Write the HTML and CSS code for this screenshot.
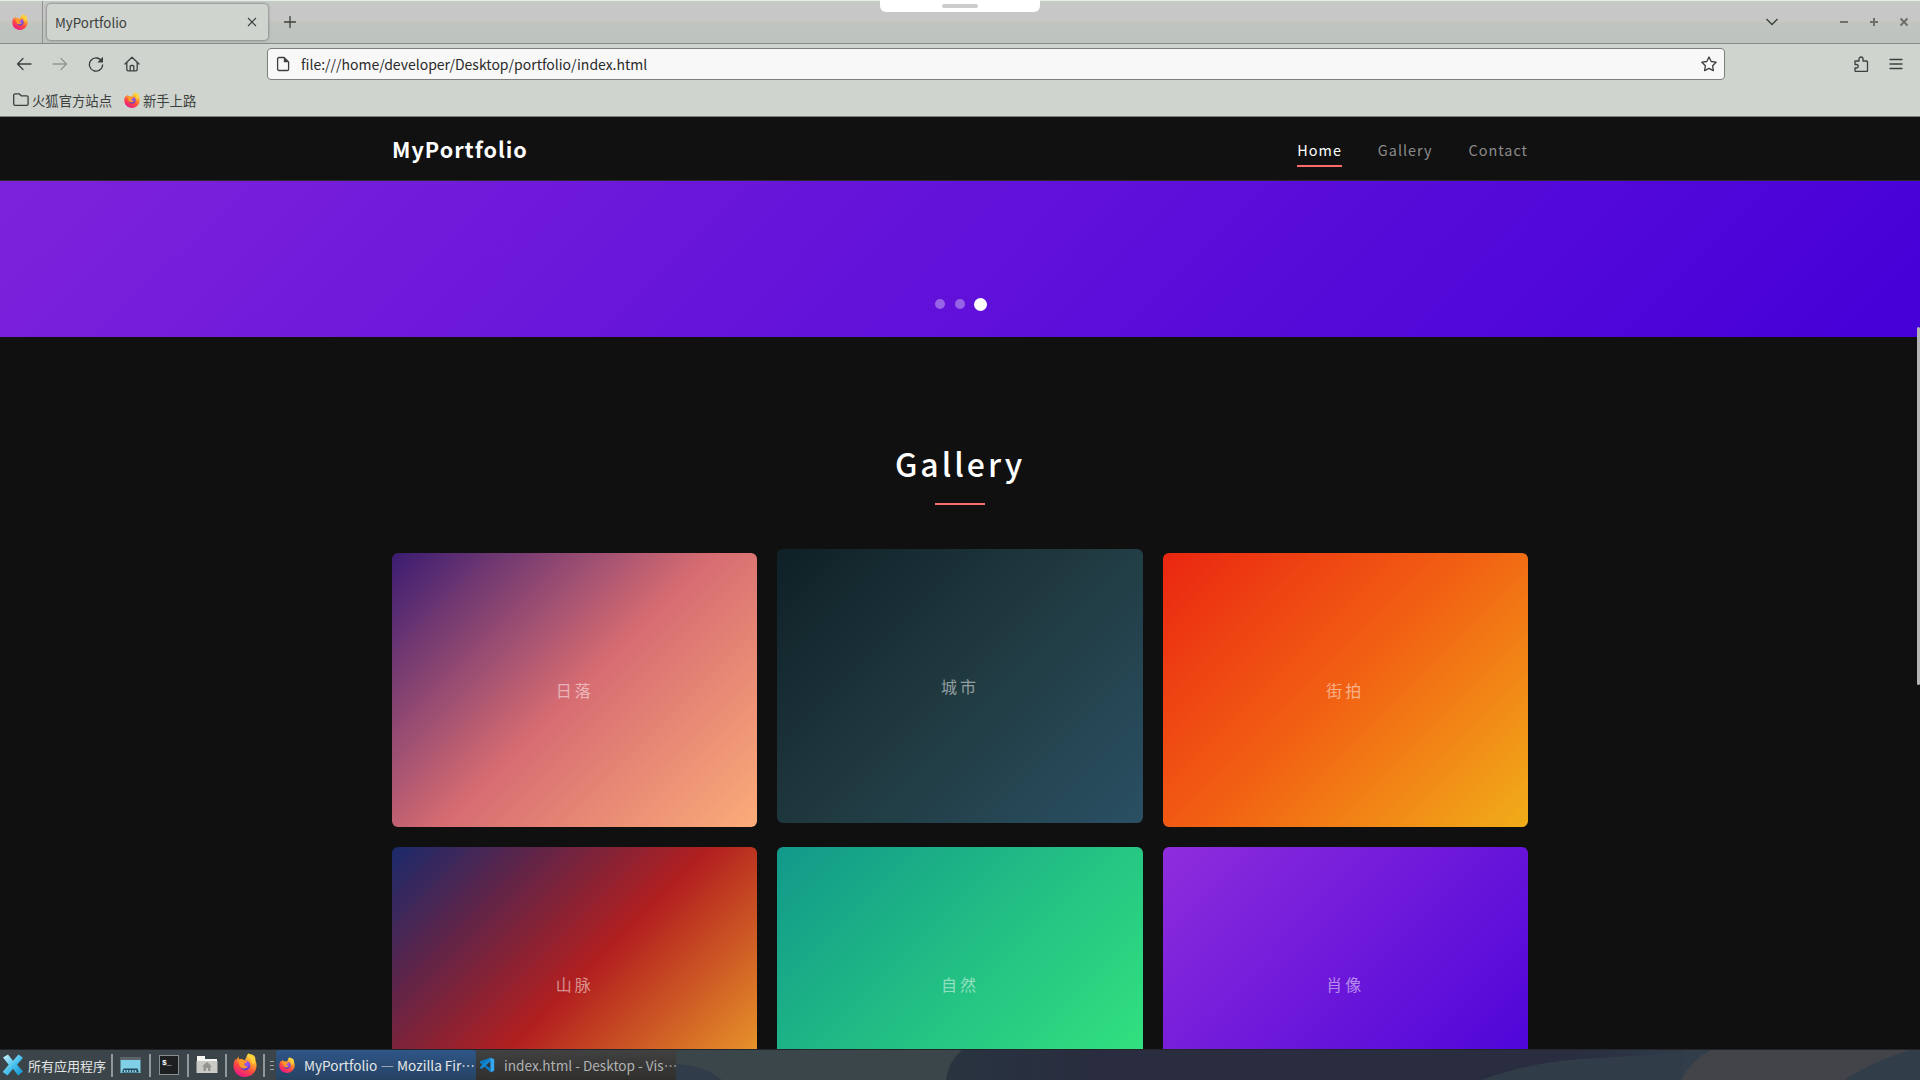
FILE: index.html
```html
<!DOCTYPE html>
<html lang="zh-CN">
  <head>
    <meta charset="UTF-8" />
    <meta name="viewport" content="width=device-width, initial-scale=1.0" />
    <title>MyPortfolio</title>
    <link rel="stylesheet" href="styles.css" />
  </head>
  <body>
    <!-- shared firefox logo -->
    <svg class="sprite" aria-hidden="true">
      <defs>
        <linearGradient id="fox-body" x1="0.8" y1="0" x2="0.3" y2="1">
          <stop offset="0" stop-color="#fff44f" />
          <stop offset="0.35" stop-color="#ffa02c" />
          <stop offset="0.65" stop-color="#ff4a42" />
          <stop offset="1" stop-color="#e8148c" />
        </linearGradient>
        <radialGradient id="fox-globe" cx="0.6" cy="0.3" r="0.8">
          <stop offset="0" stop-color="#a55cf8" />
          <stop offset="1" stop-color="#4a35c4" />
        </radialGradient>
        <symbol id="firefox" viewBox="0 0 24 24">
          <path d="M15.500 0c.4 2.200 2.300 3.400 3.500 4.700l.7-1.200C22.500 6.500 24 10 23.400 14 22.600 19.800 17.800 24 12 24 5.500 24 .5 19.100.5 12.900c0-3.100.9-5.500 2.200-7.200l.3 1.500L5.500 3.600l.5 2.600c2-.4 4 .1 5.200 1C13.400 6.400 13 3 15.500 0z" fill="url(#fox-body)" />
          <circle cx="12.300" cy="12.500" r="5" fill="url(#fox-globe)" />
          <path d="M4.500 7.500c2-1.300 5-1.100 6.800-.1 1.500.2 2.700.4 2.800 1.100-.2 1.200-2.300 1.400-2.900 2.300-.3 1.600 1.600 2.900 3.500 2.200-.6 2.400-4.200 3.200-6.500 1.600C6 13 6.500 9.500 4.500 7.500z" fill="#ff9a2a" />
          <path d="M15 1c-.5 3 4.500 5 4.500 11 2.500-1.500 3.500-5 2.500-8-1-2.500-5-3-7-3z" fill="#ffd23e" />
        </symbol>
      </defs>
    </svg>

    <div class="desktop">
      <header class="browser">
        <div class="pull-handle"><span></span></div>

        <div class="tab-bar">
          <div class="pinned"><svg class="fox"><use href="#firefox" /></svg></div>
          <div class="tab">
            <span>MyPortfolio</span>
            <svg class="tab-close" viewBox="0 0 10 10"><path d="M1 1l8 8M9 1l-8 8" /></svg>
          </div>
          <svg class="icon new-tab" viewBox="0 0 16 16"><path d="M8 2.500v11M2.500 8h11" /></svg>
          <div class="window-controls">
            <svg class="chevron" viewBox="0 0 14 8"><path d="M1.500 1l5.500 5.500L12.500 1" /></svg>
            <svg class="win" viewBox="0 0 10 10"><path d="M1 5h8" /></svg>
            <svg class="win" viewBox="0 0 10 10"><path d="M1 5h8M5 1v8" /></svg>
            <svg class="win" viewBox="0 0 10 10"><path d="M1.500 1.500l7 7M8.500 1.500l-7 7" /></svg>
          </div>
        </div>

        <div class="toolbar">
          <div class="nav-buttons">
            <svg class="icon" viewBox="0 0 16 16"><path d="M15 8H1.500M7 2.500L1.500 8 7 13.500" /></svg>
            <svg class="icon disabled" viewBox="0 0 16 16"><path d="M1 8h13.500M9 2.500L14.500 8 9 13.500" /></svg>
            <svg class="icon" viewBox="0 0 16 16"><path d="M13.700 5.200A6.600 6.600 0 1 0 14.600 9" /><path class="solid" d="M15 .8v5.700H9.300z" /></svg>
            <svg class="icon" viewBox="0 0 16 16"><path d="M1 8L8 1.200 15 8M2.800 6.500v7a1.300 1.300 0 0 0 1.300 1.300h7.800a1.300 1.300 0 0 0 1.300-1.300v-7M6.200 14.500V10.500a1 1 0 0 1 1-1h1.600a1 1 0 0 1 1 1v4" /></svg>
          </div>
          <div class="url-bar">
            <svg class="icon" viewBox="0 0 16 16"><path d="M3.900 1.500h5.200L13.600 6v7.200a1.300 1.300 0 0 1-1.300 1.300H3.900a1.300 1.300 0 0 1-1.300-1.300V2.800a1.300 1.300 0 0 1 1.300-1.300z" /><path class="solid" d="M8.800 1.500V6.300h4.800z" /></svg>
            <span class="url">file:///home/developer/Desktop/portfolio/index.html</span>
            <svg class="icon" viewBox="0 0 16 16"><path d="M8 1l2.200 4.500 4.900.7-3.500 3.500.8 4.900L8 12.300l-4.400 2.300.8-4.900L.9 6.200l4.900-.7z" /></svg>
          </div>
          <div class="toolbar-end">
            <svg class="icon" viewBox="0 0 16 16"><path d="M2 5h4V3a2 2 0 0 1 4 0v2h3.500a1 1 0 0 1 1 1v8.500a1 1 0 0 1-1 1H3a1 1 0 0 1-1-1V12h1.500a1.700 1.700 0 0 0 0-3.500H2z" /></svg>
            <svg class="icon" viewBox="0 0 16 16"><path d="M2 3.500h12M2 8h12M2 12.500h12" /></svg>
          </div>
        </div>

        <div class="bookmarks">
          <span class="bookmark">
            <svg class="icon" viewBox="0 0 16 16"><path d="M2 1.800h4.200l2 2h5.600a1.300 1.300 0 0 1 1.300 1.300v7a1.300 1.300 0 0 1-1.300 1.300H2A1.300 1.300 0 0 1 .7 12.100v-9A1.300 1.300 0 0 1 2 1.800z" /></svg>
            火狐官方站点
          </span>
          <span class="bookmark">
            <svg class="fox"><use href="#firefox" /></svg>
            新手上路
          </span>
        </div>
      </header>

      <main class="page">
        <div class="scroll-thumb"></div>

        <nav class="navbar">
          <div class="container nav-inner">
            <a class="logo">MyPortfolio</a>
            <ul class="nav-links">
              <li><a class="active">Home</a></li>
              <li><a>Gallery</a></li>
              <li><a>Contact</a></li>
            </ul>
          </div>
        </nav>

        <section class="hero">
          <div class="slide"></div>
          <div class="dots">
            <span class="dot"></span>
            <span class="dot"></span>
            <span class="dot active"></span>
          </div>
        </section>

        <section class="gallery container">
          <h2 class="section-title">Gallery</h2>
          <div class="gallery-grid">
            <div class="card sunset">日落</div>
            <div class="card city hovered">城市</div>
            <div class="card street">街拍</div>
            <div class="card mountain">山脉</div>
            <div class="card nature">自然</div>
            <div class="card portrait">肖像</div>
          </div>
        </section>
      </main>

      <footer class="taskbar">
        <div class="app-menu">
          <svg viewBox="0 0 22 22">
            <defs>
              <linearGradient id="menu-x" x1="0" y1="0" x2="1" y2="1">
                <stop offset="0" stop-color="#d8f4fc" />
                <stop offset="0.5" stop-color="#4cc4ee" />
                <stop offset="1" stop-color="#0a8fd0" />
              </linearGradient>
            </defs>
            <path fill="url(#menu-x)" d="M1 3.500L6 .5l5 6.300L16.500.5l4.500 3.200-6 7.100 6 6.800-5 3.900-5-6.700-5.500 6.700L.7 18l6-7.200z" />
          </svg>
          <span>所有应用程序</span>
        </div>
        <i class="sep"></i>
        <svg class="launcher" viewBox="0 0 24 24">
          <path fill="#5b6468" d="M1 4h21v3H1z" />
          <path fill="#7fd0e6" d="M1.500 7h20v13h-20z" />
          <path fill="#22485c" d="M3 19.500l1.500-4h14l1.500 4z" />
          <path stroke="#8fdaf0" stroke-width="2" stroke-dasharray="1.500 1.200" d="M5 18h13" />
        </svg>
        <i class="sep"></i>
        <div class="launcher"><div class="terminal">$_</div></div>
        <i class="sep"></i>
        <svg class="launcher" viewBox="0 0 24 24">
          <path fill="#f6f6f4" d="M2 3h8v3h12v4H2z" />
          <path fill="#c9cac6" d="M1.500 8h21v12h-21z" />
          <path fill="#92948f" d="M12 9l5 4.500h-1.500V18h-2.500v-3h-2v3H8.500v-4.500H7z" />
        </svg>
        <i class="sep"></i>
        <svg class="launcher"><use href="#firefox" /></svg>
        <i class="sep"></i>
        <div class="grip"><i></i><i></i><i></i></div>
        <div class="task focused">
          <svg class="fox"><use href="#firefox" /></svg>
          <span>MyPortfolio — Mozilla Fir⋯</span>
        </div>
        <div class="task">
          <svg class="fox" viewBox="0 0 16 16">
            <path fill="#0c79c4" d="M11.500.8v14.400L1 5.800.8 4.600l1.400-.8z" />
            <path fill="#1688d4" d="M.8 10.300L11.500.8v4L2.200 12.200z" />
            <path fill="#2d343a" d="M11.500 4.600v6.800L7 8z" />
            <path fill="#35a6f0" d="M11.500.6l3.700 1.700v11.400l-3.700 1.700z" />
          </svg>
          <span>index.html - Desktop - Vis⋯</span>
        </div>
        <svg class="wallpaper" viewBox="0 0 1244 30" preserveAspectRatio="none">
          <defs>
            <linearGradient id="wall-dark">
              <stop offset="0" stop-color="#283440" />
              <stop offset="0.2" stop-color="#292d3f" />
              <stop offset="0.85" stop-color="#292d3f" />
              <stop offset="1" stop-color="#2f3b49" />
            </linearGradient>
          </defs>
          <path fill="#303c49" d="M0 14q30 2 46 16H0z" />
          <path fill="url(#wall-dark)" d="M286 0h722v30H270q2-18 16-30z" />
          <path fill="#303d48" d="M805 30q50-18 100-21l100-6v27z" />
          <path fill="#434449" d="M1035 0h200q-40 12-66 30h-164q10-20 30-30z" />
          <path fill="#323d4a" d="M1008 0h27q-20 10-30 30zM1235 0h9v30h-75q26-18 66-30z" />
        </svg>
      </footer>
    </div>
  </body>
</html>
```
FILE: styles.css
```css
* {
  padding: 0;
  margin: 0;
  box-sizing: border-box;
}

body {
  font-family: "Noto Sans CJK SC", "Noto Sans", sans-serif;
  overflow: hidden;
}

svg {
  display: block;
  flex: none;
}

.sprite {
  position: absolute;
  width: 0;
  height: 0;
}

.desktop {
  display: flex;
  flex-direction: column;
  width: 1920px;
  height: 1080px;
  background: #101010;
}

/* browser chrome */
.browser {
  position: relative;
  height: 117px;
  flex: none;
  background: #cfd4cf;
  border-bottom: 1px solid #7f827f;
  color: #3c403d;
  font-size: 14px;
}

.pull-handle {
  position: absolute;
  left: 880px;
  top: 0;
  width: 160px;
  height: 12px;
  padding-top: 4px;
  background: #fff;
  border-radius: 0 0 6px 6px;
}

.pull-handle span {
  display: block;
  width: 36px;
  height: 4px;
  margin: 0 auto;
  border-radius: 2px;
  background: #ccc;
}

.tab-bar {
  display: flex;
  align-items: center;
  height: 44px;
  border-top: 1px solid #e6eee8;
  border-bottom: 1px solid #868a86;
  background: linear-gradient(#c5cbc5 0, #c7c7c7 7px, #c7c7c7 20px, #c1c5bd 22px, #bec4bf 27px, #bdc2bd 100%);
}

.pinned {
  width: 43px;
  height: 100%;
  padding: 13px 0 0 12px;
  border-right: 1px solid #8f938f;
}

.fox {
  width: 16px;
  height: 16px;
}

.tab {
  display: flex;
  align-items: center;
  justify-content: space-between;
  width: 221px;
  height: 36px;
  margin-left: 4px;
  padding: 0 11px 0 8px;
  border-radius: 4px;
  background: #cfd4cf;
  box-shadow: 0 0 3px rgba(0, 0, 0, 0.55);
  font-size: 13.33px;
}

.tab-close {
  width: 10px;
  height: 10px;
  stroke: #3c403d;
  stroke-width: 1.1;
}

.icon {
  width: 16px;
  height: 16px;
  fill: none;
  stroke: #3c403d;
  stroke-width: 1.3;
  stroke-linejoin: round;
  stroke-linecap: round;
}

.icon .solid {
  fill: #3c403d;
  stroke: none;
}

.icon.disabled {
  opacity: 0.4;
}

.new-tab {
  margin-left: 14px;
}

.window-controls {
  display: flex;
  align-items: center;
  gap: 20px;
  margin-left: auto;
  padding-right: 11px;
  fill: none;
}

.chevron {
  width: 14px;
  height: 8px;
  margin-right: 40px;
  stroke: #3c403d;
  stroke-width: 1.4;
}

.win {
  width: 10px;
  height: 10px;
  stroke: #6d706d;
  stroke-width: 2;
}

.toolbar {
  display: flex;
  align-items: center;
  height: 40px;
}

.nav-buttons {
  display: flex;
  gap: 20px;
  width: 267px;
  padding-left: 16px;
}

.url-bar {
  display: flex;
  align-items: center;
  width: 1458px;
  height: 32px;
  padding: 0 7px;
  border: 1px solid #7d7f7d;
  border-radius: 4px;
  background: #f8f8f8;
}

.url {
  flex: 1;
  margin-left: 10px;
  color: #2a2a2a;
}

.toolbar-end {
  display: flex;
  gap: 19px;
  margin-left: auto;
  padding-right: 16px;
}

.bookmarks {
  display: flex;
  gap: 12px;
  height: 32px;
  padding-left: 13px;
  font-size: 13.33px;
}

.bookmark {
  display: flex;
  align-items: center;
  gap: 3px;
}

/* portfolio page */
.page {
  position: relative;
  flex: 1;
  min-height: 0;
  overflow: hidden;
  color: #fff;
}

.scroll-thumb {
  position: absolute;
  z-index: 2;
  right: 0;
  top: 210px;
  width: 3px;
  height: 358px;
  border-radius: 2px;
  background: #b4b4b4;
}

.container {
  width: 1200px;
  margin: 0 auto;
  padding: 0 32px;
}

.navbar {
  height: 64px;
  background: #111;
  border-bottom: 1px solid #2c2c2c;
}

.nav-inner {
  display: flex;
  align-items: center;
  justify-content: space-between;
  height: 100%;
}

.logo {
  font-size: 21.6px;
  font-weight: 700;
  letter-spacing: 1px;
}

.nav-links {
  display: flex;
  gap: 36px;
  list-style: none;
  padding-top: 9px;
}

.nav-links a {
  display: block;
  padding-bottom: 4px;
  border-bottom: 2px solid transparent;
  color: #8c8c8c;
  font-size: 14.4px;
  line-height: 22px;
  letter-spacing: 1px;
}

.nav-links a.active {
  color: #fff;
  border-bottom-color: #ff6b6b;
}

.hero {
  display: flex;
  flex-direction: column;
  justify-content: flex-end;
  position: relative;
  height: 156px;
  overflow: hidden;
}

.slide {
  flex: none;
  height: 700px;
  background: linear-gradient(135deg, #8c2bdc, #4500d8);
}

.dots {
  position: absolute;
  left: 0;
  right: 0;
  bottom: 28px;
  display: flex;
  justify-content: center;
  gap: 10px;
}

.dot {
  width: 10px;
  height: 10px;
  border-radius: 50%;
  background: rgba(255, 255, 255, 0.35);
}

.dot.active {
  background: #fff;
  transform: translate(0.5px, 0.5px) scale(1.3);
}

.gallery {
  padding-top: 96px;
}

.section-title {
  display: flex;
  flex-direction: column;
  align-items: center;
  margin-bottom: 48px;
  font-size: 32px;
  font-weight: 500;
  line-height: 60px;
  letter-spacing: 3px;
}

.section-title::after {
  content: "";
  width: 50px;
  height: 2px;
  margin-top: 10px;
  background: #ff6b6b;
}

.gallery-grid {
  display: grid;
  grid-template-columns: repeat(3, 1fr);
  gap: 20px;
}

.card {
  display: flex;
  align-items: center;
  justify-content: center;
  aspect-ratio: 4 / 3;
  border-radius: 6px;
  color: rgba(255, 255, 255, 0.5);
  font-size: 16px;
  letter-spacing: 3px;
}

.card.hovered {
  transform: translateY(-4px);
}

.sunset {
  background: linear-gradient(135deg, #3a1c71, #d66c72, #fcac79);
}

.city {
  background: linear-gradient(135deg, #0f2027, #203a40, #2a5064);
}

.street {
  background: linear-gradient(135deg, #ea2611, #f26213, #f0ad19);
}

.mountain {
  background: linear-gradient(135deg, #1a2a6c, #b21f1f, #f6b42d);
}

.nature {
  background: linear-gradient(135deg, #11998a, #36ea7d);
}

.portrait {
  background: linear-gradient(135deg, #8e2ddc, #4700d8);
}

/* desktop panel */
.taskbar {
  display: flex;
  align-items: center;
  flex: none;
  height: 31px;
  border-top: 1px solid #22262a;
  background: #3b4448;
  color: #e4e6e6;
  font-size: 13px;
}

.app-menu {
  display: flex;
  align-items: center;
  gap: 4px;
  width: 110px;
  padding-left: 2px;
  white-space: nowrap;
}

.app-menu svg {
  width: 22px;
  height: 22px;
}

.sep {
  flex: none;
  width: 2px;
  height: 23px;
  margin-left: 1px;
  background: #92979a;
}

.launcher {
  display: flex;
  align-items: center;
  justify-content: center;
  flex: none;
  width: 24px;
  height: 24px;
  margin: 0 5px 0 6px;
}

.terminal {
  width: 20px;
  height: 20px;
  padding-left: 2px;
  border: 1px solid #8b8e90;
  background: #1d1f21;
  color: #fff;
  font: 700 8px/13px "Liberation Mono", monospace;
}

.grip {
  display: flex;
  flex-direction: column;
  gap: 3px;
  width: 11px;
  padding-left: 5px;
}

.grip i {
  width: 4px;
  height: 1px;
  background: #a0a5a8;
}

.task {
  display: flex;
  align-items: center;
  gap: 9px;
  width: 200px;
  height: 100%;
  padding-left: 3px;
  background: linear-gradient(#414141, #302f2e);
  color: #b0b2b2;
  font-size: 13.6px;
  white-space: nowrap;
}

.task.focused {
  border-radius: 3px;
  background: linear-gradient(#2f5688, #254262);
  color: #e4e6e6;
}

.wallpaper {
  flex: 1;
  height: 30px;
  background: #3b464a;
}
```
